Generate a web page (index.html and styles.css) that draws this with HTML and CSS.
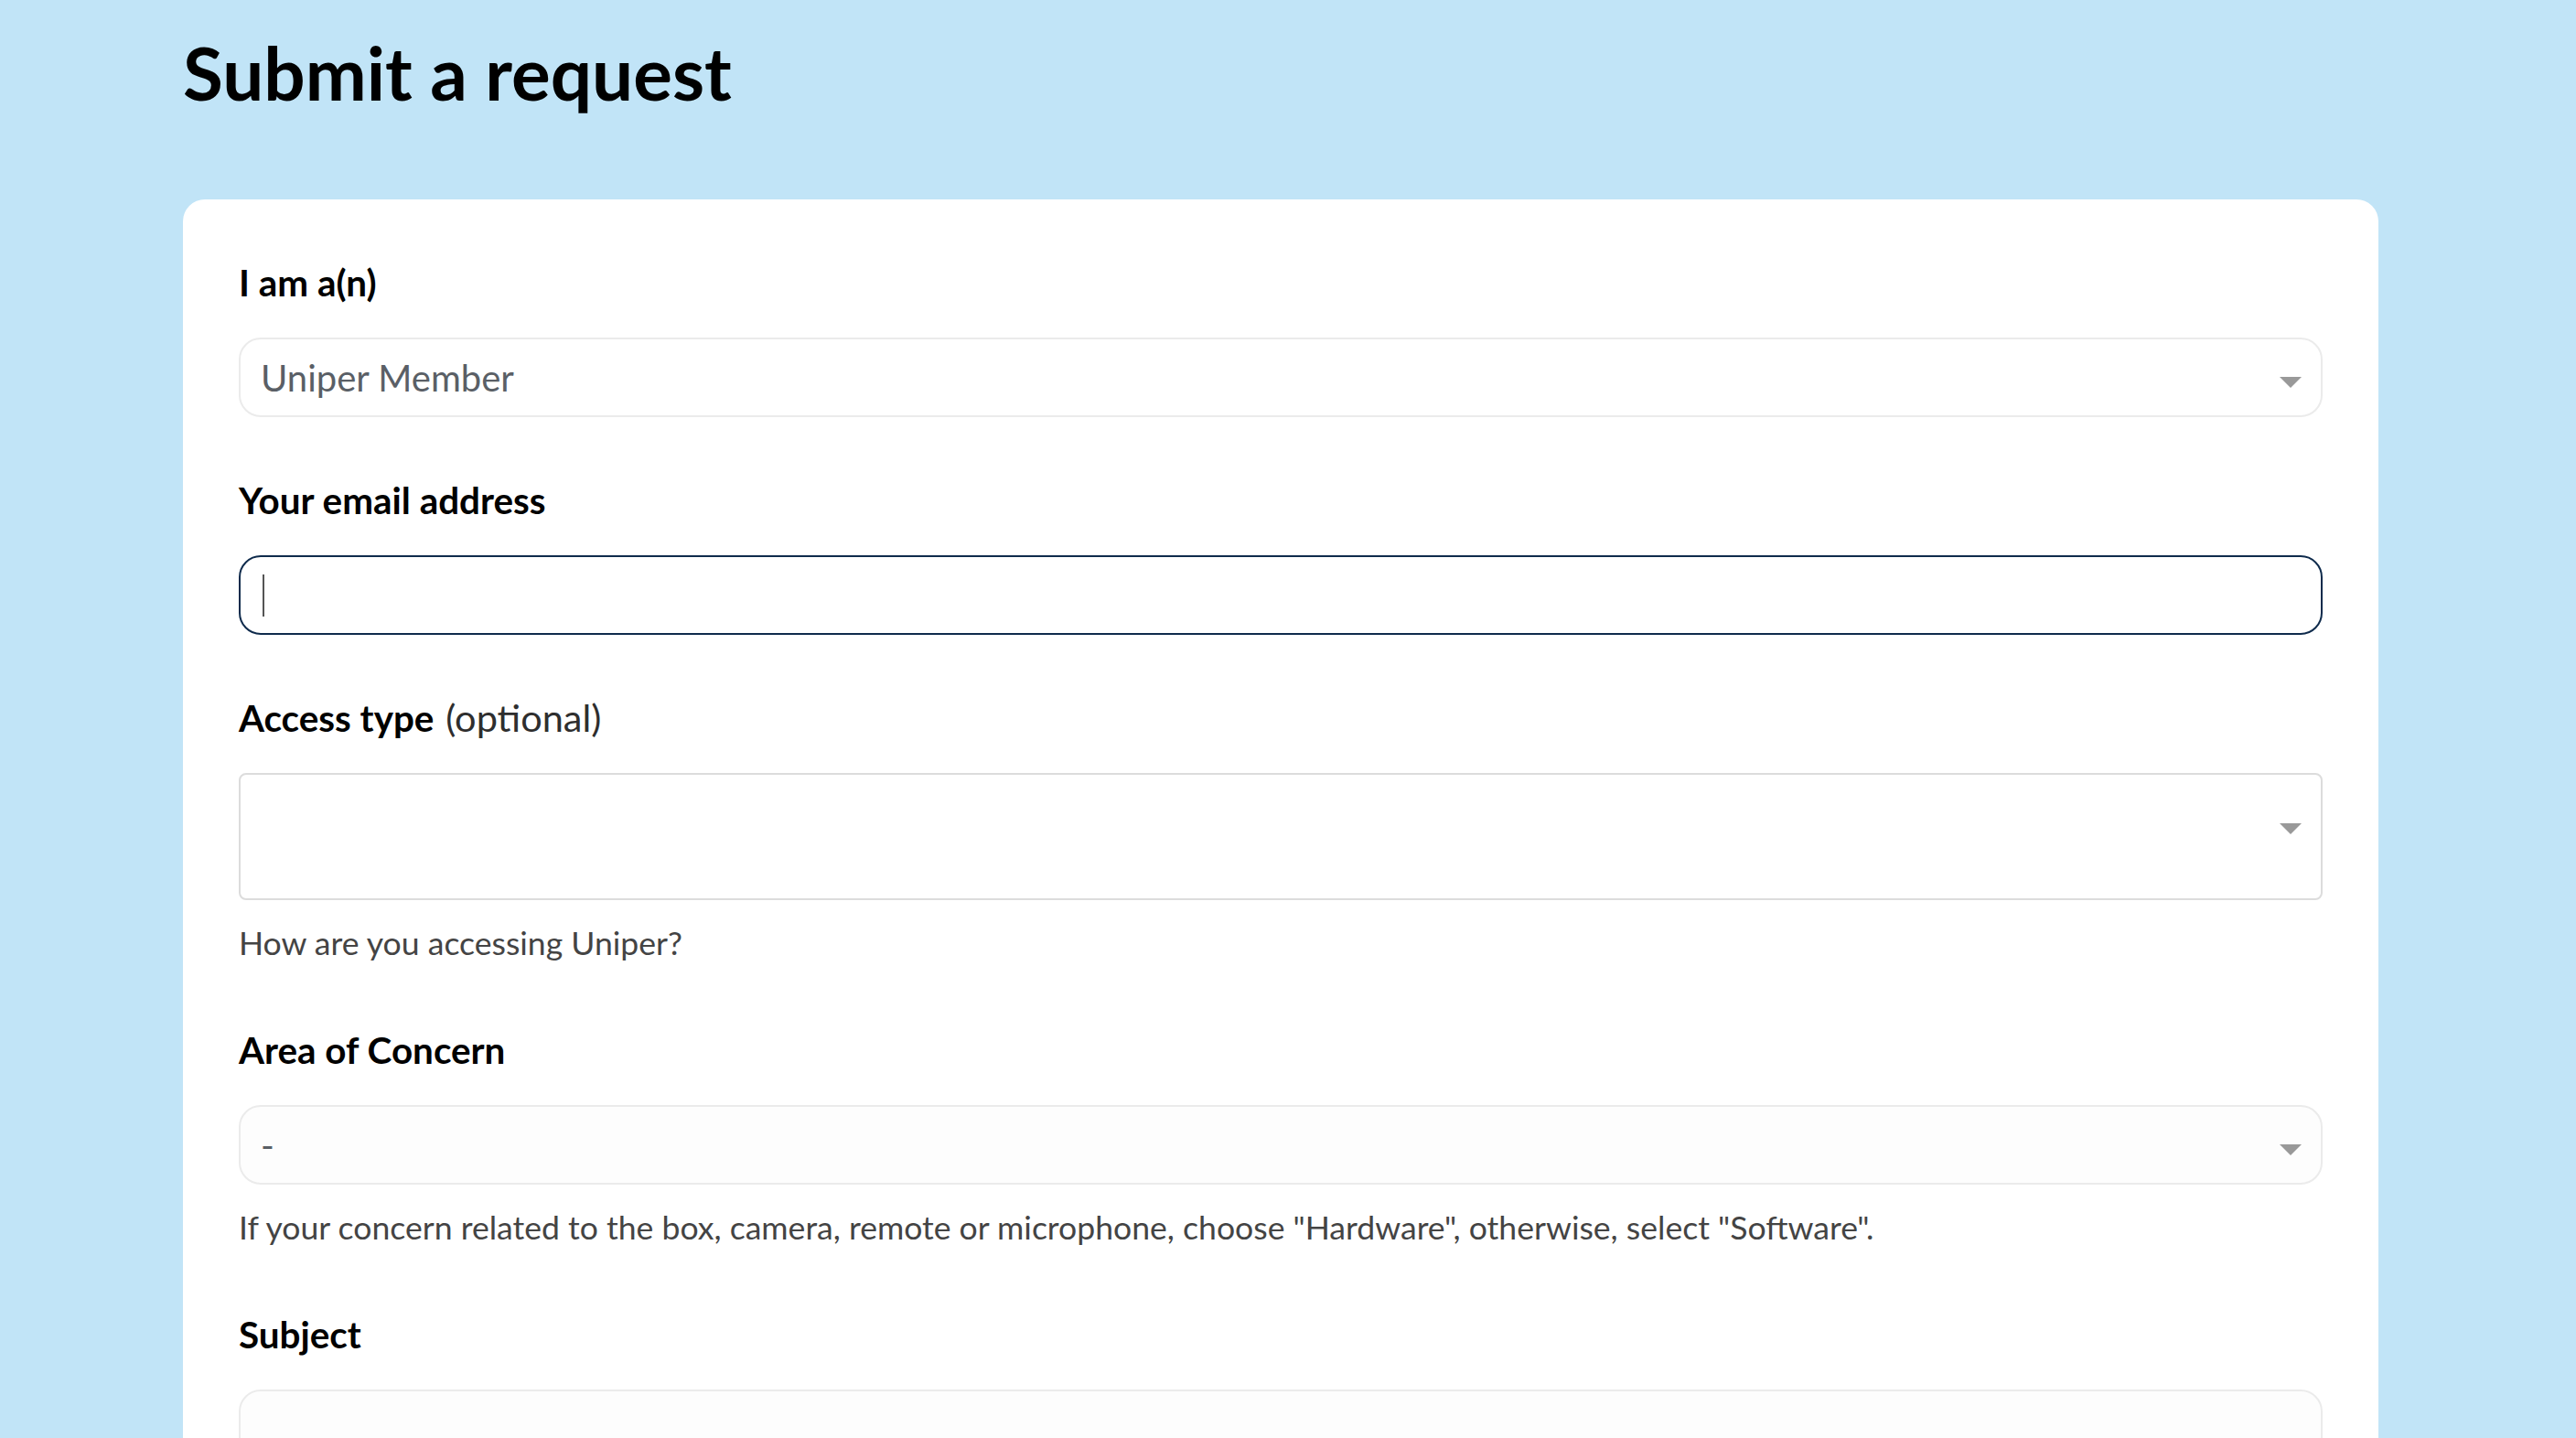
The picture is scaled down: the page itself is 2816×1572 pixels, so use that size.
FILE: index.html
```html
<!DOCTYPE html>
<html lang="en">
<head>
	<meta charset="UTF-8">
	<title>Submit a request</title>
	<link rel="stylesheet" href="styles.css">
</head>
<body>
	<div class="page">
		<h1 class="title">Submit a request</h1>
		<form class="card">
			<div class="field">
				<div class="label">I am a(n)</div>
				<div class="select">
					<span class="value">Uniper Member</span>
					<svg class="arrow" width="24" height="12" viewBox="0 0 24 12"><path d="M0 0H24L12 12Z"/></svg>
				</div>
			</div>
			<div class="field">
				<div class="label">Your email address</div>
				<div class="input focused"><span class="caret"></span></div>
			</div>
			<div class="field">
				<div class="label">Access type <span class="optional">(optional)</span></div>
				<div class="select multi">
					<span class="value"></span>
					<svg class="arrow" width="24" height="12" viewBox="0 0 24 12"><path d="M0 0H24L12 12Z"/></svg>
				</div>
				<p class="hint">How are you accessing Uniper?</p>
			</div>
			<div class="field">
				<div class="label">Area of Concern</div>
				<div class="select shaded">
					<span class="value">-</span>
					<svg class="arrow" width="24" height="12" viewBox="0 0 24 12"><path d="M0 0H24L12 12Z"/></svg>
				</div>
				<p class="hint">If your concern related to the box, camera, remote or microphone, choose "Hardware", otherwise, select "Software".</p>
			</div>
			<div class="field">
				<div class="label">Subject</div>
				<div class="input shaded"></div>
			</div>
		</form>
	</div>
</body>
</html>
```

FILE: styles.css
```css
*{
	box-sizing: border-box;
}
body{
	margin: 0;
	background-color: #c1e4f7;
	font-family: Lato, "Noto Sans", sans-serif;
	color: #000;
}
.page{
	width: 2400px;
	margin-left: 200px;
}
.title{
	margin: 0;
	padding-top: 31px;
	font-size: 80px;
	line-height: 96px;
	font-weight: 700;
}
.card{
	margin-top: 91px;
	background-color: #fff;
	border-radius: 24px;
	padding: 63px 61px 200px;
}
.field{
	margin-bottom: 63px;
}
.label{
	font-size: 40.4px;
	line-height: 56px;
	font-weight: 700;
	margin-bottom: 32px;
}
.optional{
	margin-left: 3px;
	font-size: 41.5px;
	line-height: 40px;
	font-weight: 400;
	color: #2e2e2e;
}
.select,
.input{
	height: 87px;
	border: 2px solid #ebebeb;
	border-radius: 24px;
	background-color: #fff;
}
.select{
	display: flex;
	align-items: center;
	justify-content: space-between;
	padding: 0 21px 0 22px;
}
.select .value{
	font-size: 40px;
	color: #5a5f66;
}
.arrow{
	fill: #999;
	margin-top: 10px;
}
.select.multi{
	height: 139px;
	border-color: #dcdcdc;
	border-radius: 8px;
	align-items: flex-start;
}
.select.multi .arrow{
	margin-top: 53px;
}
.shaded{
	background-color: #fdfdfd;
}
.input.focused{
	border-color: #0f2b4c;
	display: flex;
	align-items: center;
	padding-left: 24px;
}
.caret{
	width: 2px;
	height: 46px;
	background-color: #555;
}
.hint{
	margin: 22px 0 0;
	padding-bottom: 1px;
	font-size: 35.6px;
	line-height: 50px;
	color: #444;
}
```
